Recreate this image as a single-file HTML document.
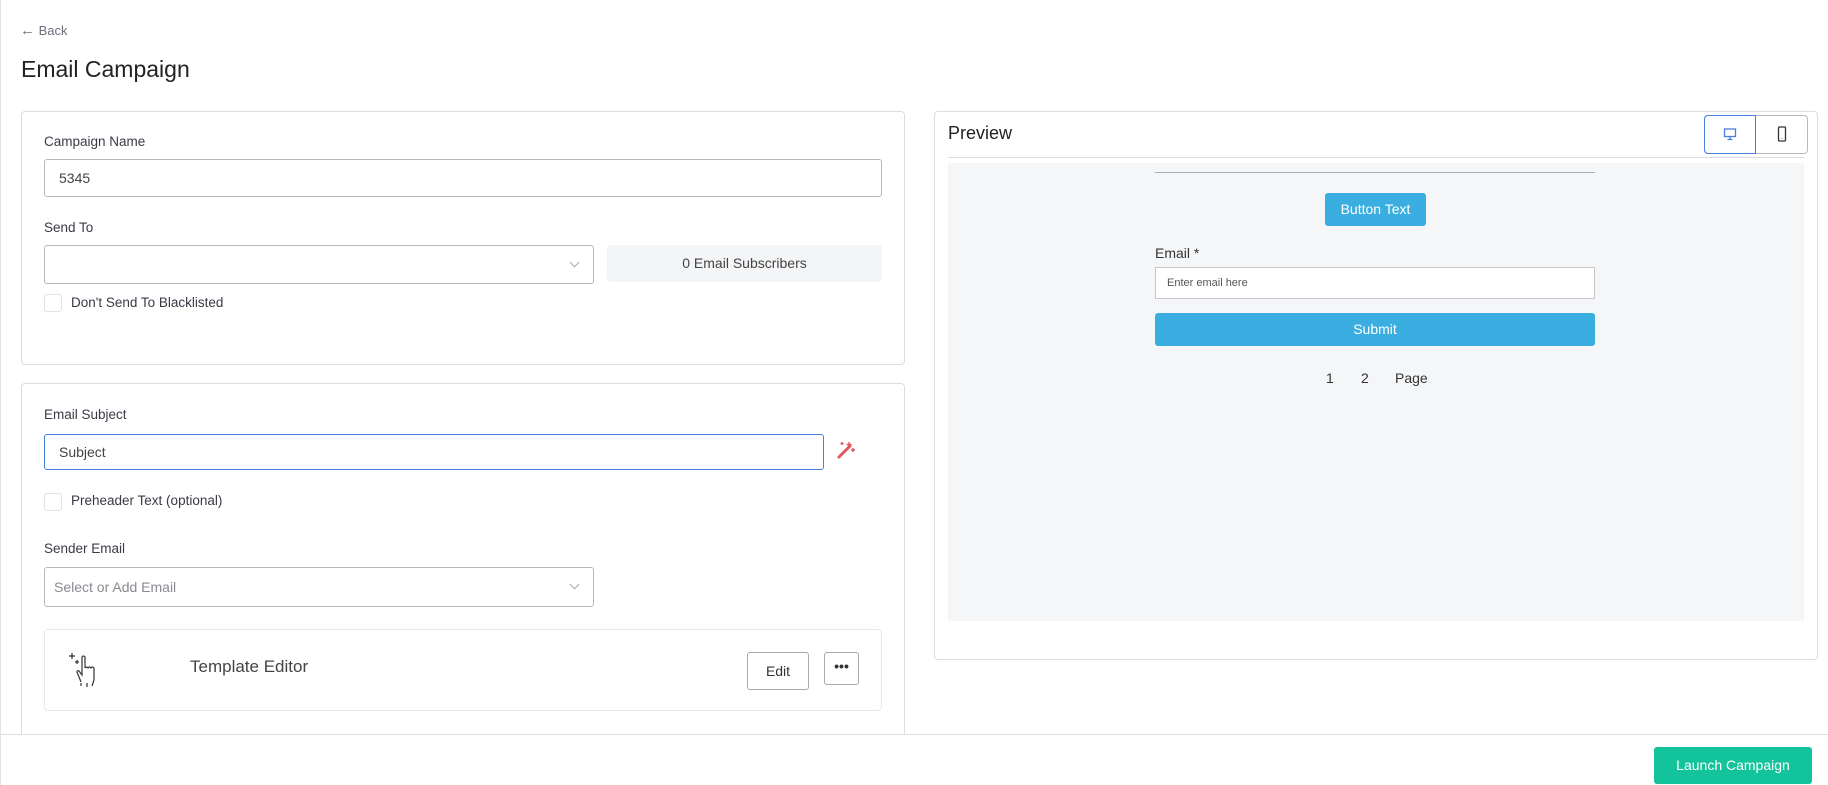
<!DOCTYPE html>
<html><head><meta charset="utf-8"><style>
*{box-sizing:border-box;margin:0;padding:0}
body{width:1828px;height:785px;overflow:hidden;background:#fff;font-family:"Liberation Sans",sans-serif;color:#333;position:relative;border-left:1px solid #e3e3e3}
.a{position:absolute}
.card{position:absolute;border:1px solid #dcdde0;border-radius:4px;background:#fff}
.lbl{position:absolute;font-size:13.5px;color:#3a3a45}
.inp{position:absolute;border:1px solid #b9b9bd;border-radius:3px;background:#fff;font-size:14px;color:#444}
.cb{position:absolute;width:18px;height:18px;border:1px solid #e2e2e6;border-radius:3px}
.chev{position:absolute;right:15px;top:50%;margin-top:-6px;width:7px;height:7px;border-right:1px solid #aaa;border-bottom:1px solid #aaa;transform:rotate(45deg)}
</style></head><body>
<div class="a" style="left:19px;top:22px;font-size:13px;color:#6b6f80"><span style="font-size:15px">&#8592;</span> Back</div>
<div class="a" style="left:20px;top:56px;font-size:23px;color:#222">Email Campaign</div>

<div class="card" style="left:20px;top:111px;width:884px;height:254px"></div>
<div class="lbl" style="left:43px;top:134px">Campaign Name</div>
<div class="inp" style="left:43px;top:159px;width:838px;height:38px;padding:10px 14px">5345</div>
<div class="lbl" style="left:43px;top:220px">Send To</div>
<div class="inp" style="left:43px;top:245px;width:550px;height:39px"><div class="chev"></div></div>
<div class="a" style="left:606px;top:245px;width:275px;height:37px;background:#f4f5f7;border-radius:3px;font-size:14px;color:#444;text-align:center;line-height:37px">0 Email Subscribers</div>
<div class="cb" style="left:43px;top:294px"></div>
<div class="lbl" style="left:70px;top:295px">Don't Send To Blacklisted</div>

<div class="card" style="left:20px;top:383px;width:884px;height:400px"></div>
<div class="lbl" style="left:43px;top:407px">Email Subject</div>
<div class="inp" style="left:43px;top:434px;width:780px;height:36px;border-color:#4a80e0;padding:9px 14px">Subject</div>
<svg class="a" style="left:835px;top:440px" width="20" height="20" viewBox="0 0 20 20"><path d="M3 17 L14 6" stroke="#e0565b" stroke-width="3" stroke-linecap="round"/><path d="M13 2v5M10.5 4.5h5M17 8v4M15 10h4M6 2v3M4.5 3.5h3" stroke="#e0565b" stroke-width="1.4"/></svg>
<div class="cb" style="left:43px;top:493px"></div>
<div class="lbl" style="left:70px;top:493px">Preheader Text (optional)</div>
<div class="lbl" style="left:43px;top:541px">Sender Email</div>
<div class="inp" style="left:43px;top:567px;width:550px;height:40px;padding:11px 9px;color:#8a8a90">Select or Add Email<div class="chev"></div></div>
<div class="a" style="left:43px;top:629px;width:838px;height:82px;border:1px solid #e8e9ec;border-radius:4px"></div>
<svg class="a" style="left:64px;top:650px" width="40" height="40" viewBox="0 0 40 40" fill="none" stroke="#333" stroke-width="1.2"><path d="M4 6h6M7 3v6M10 12h4M12 10v4"/><path d="M16 32 L12 22 Q12 20 14 21 L17 25 V7 Q18 5 20 7 V18 Q21 16 23 18 Q24 16 26 18 Q27 16 29 18 V30 L27 36"/><path d="M16 33 V36 M21 34 h2 M21 36h2"/></svg>
<div class="a" style="left:189px;top:657px;font-size:17px;color:#444">Template Editor</div>
<div class="a" style="left:746px;top:652px;width:62px;height:38px;border:1px solid #a8a8ad;border-radius:3px;font-size:14px;text-align:center;line-height:36px;color:#333">Edit</div>
<div class="a" style="left:823px;top:652px;width:35px;height:33px;border:1px solid #a8a8ad;border-radius:3px;font-size:14px;text-align:center;line-height:26px;font-weight:bold;color:#333">&bull;&bull;&bull;</div>

<div class="card" style="left:933px;top:111px;width:884px;height:549px"></div>
<div class="a" style="left:947px;top:123px;font-size:18px;color:#222">Preview</div>
<div class="a" style="left:1703px;top:115px;width:104px;height:39px;border:1px solid #b9b9bd;border-radius:4px"></div>
<div class="a" style="left:1703px;top:115px;width:52px;height:39px;border:1px solid #4a80e0;border-radius:4px 0 0 4px"></div>
<svg class="a" style="left:1722px;top:127px" width="14" height="14" viewBox="0 0 14 14" fill="none" stroke="#4a80e0" stroke-width="1.3"><rect x="1.5" y="2" width="11" height="7.5"/><path d="M7 9.5v3M4.5 12.5h5"/></svg>
<svg class="a" style="left:1775px;top:126px" width="12" height="16" viewBox="0 0 12 16" fill="none" stroke="#333" stroke-width="1.3"><rect x="2.5" y="1" width="7" height="14" rx="1"/><path d="M6 12.5v.5"/></svg>
<div class="a" style="left:947px;top:157px;width:856px;height:1px;background:#dcdde0"></div>
<div class="a" style="left:947px;top:163px;width:856px;height:458px;background:#f5f6f8"></div>
<div class="a" style="left:1154px;top:172px;width:440px;height:1px;background:#b0b0b4"></div>
<div class="a" style="left:1324px;top:193px;width:101px;height:33px;background:#3aaee0;border-radius:3px;color:#fff;font-size:14px;text-align:center;line-height:33px">Button Text</div>
<div class="a" style="left:1154px;top:245px;font-size:14px;color:#333">Email *</div>
<div class="a" style="left:1154px;top:267px;width:440px;height:32px;background:#fff;border:1px solid #c8c8cc;font-size:11px;color:#555;padding:9px 11px">Enter email here</div>
<div class="a" style="left:1154px;top:313px;width:440px;height:33px;background:#3aaee0;border-radius:3px;color:#fff;font-size:14px;text-align:center;line-height:33px">Submit</div>
<div class="a" style="left:1325px;top:370px;font-size:14px;color:#333">1</div>
<div class="a" style="left:1360px;top:370px;font-size:14px;color:#333">2</div>
<div class="a" style="left:1394px;top:370px;font-size:14px;color:#333">Page</div>

<div class="a" style="left:0;top:734px;width:1828px;height:51px;background:#fff;border-top:1px solid #dcdde0"></div>
<div class="a" style="left:1653px;top:747px;width:158px;height:37px;background:#13c39b;border-radius:3px;color:#fff;font-size:14px;text-align:center;line-height:37px">Launch Campaign</div>
</body></html>
